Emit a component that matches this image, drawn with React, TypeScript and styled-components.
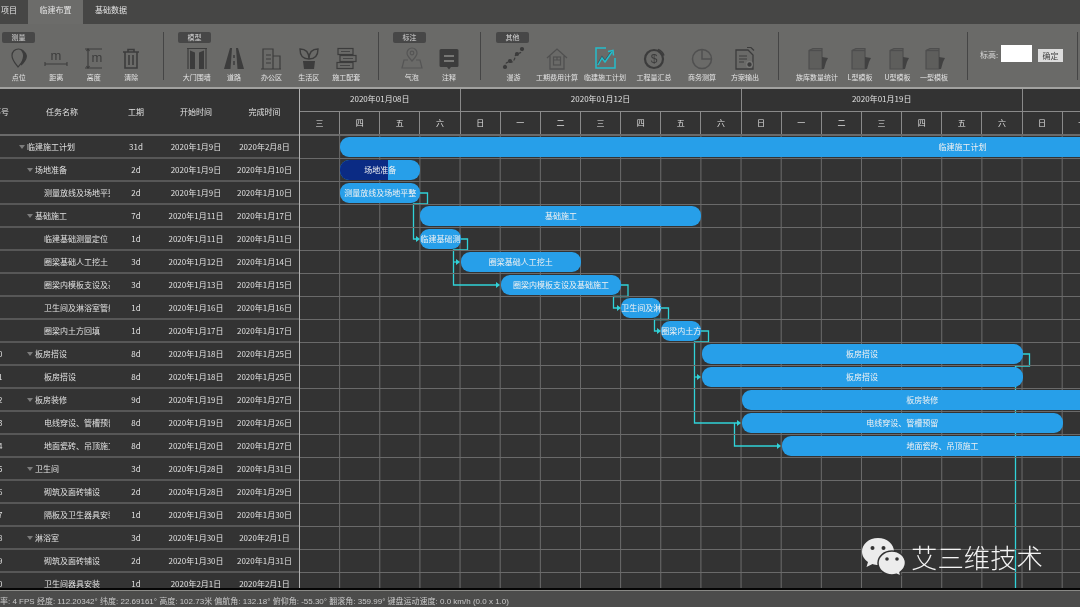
import React from "react";
import styled, { createGlobalStyle } from "styled-components";

const DAY = 40.15;
const ROW = 23.03;
const FONT = `"Noto Sans CJK SC", "Liberation Sans", sans-serif`;

const Global = createGlobalStyle`
  html, body { margin: 0; padding: 0; width: 1080px; height: 607px; overflow: hidden; background: #333; }
  * { box-sizing: border-box; }
`;

const Page = styled.div`
  position: relative;
  width: 1080px;
  height: 607px;
  display: flex;
  flex-direction: column;
  overflow: hidden;
  font-family: ${FONT};
  font-size: 8px;
  color: #e0e0e0;
  background: #333;
  filter: blur(0.4px);
`;

const TabBar = styled.div`
  height: 24px;
  flex: none;
  display: flex;
  background: #464645;
`;

const Tab = styled.div<{ $w: number; $active?: boolean; $left?: boolean }>`
  width: ${(p) => p.$w}px;
  height: 24px;
  padding: 4px 0 0 ${(p) => (p.$left ? 1 : 0)}px;
  line-height: 11px;
  text-align: ${(p) => (p.$left ? "left" : "center")};
  background: ${(p) => (p.$active ? "#6c6c6a" : "transparent")};
  color: #e2e2e2;
`;

const Ribbon = styled.div`
  height: 63px;
  flex: none;
  display: flex;
  background: #6a6a68;
`;

const Sep = styled.div`
  width: 1px;
  height: 48px;
  margin-top: 8px;
  flex: none;
  background: #454545;
`;

const Group = styled.div<{ $w: number; $pad: number }>`
  width: ${(p) => p.$w}px;
  flex: none;
  padding: 8px 0 0 ${(p) => p.$pad}px;
`;

const Chip = styled.div<{ $inset?: number }>`
  width: 33px;
  height: 11px;
  margin-left: ${(p) => p.$inset ?? 0}px;
  border-radius: 2px;
  background: #474747;
  color: #d8d8d8;
  text-align: center;
  font-size: 7px;
  line-height: 11px;
`;

const Tools = styled.div<{ $noChip?: boolean }>`
  display: flex;
  margin-top: ${(p) => (p.$noChip ? 14 : 3)}px;
`;

const Tool = styled.div<{ $w: number }>`
  width: ${(p) => p.$w}px;
  flex: none;
  display: flex;
  flex-direction: column;
  align-items: center;
`;

const IconSlot = styled.div`
  height: 24px;
  display: flex;
  align-items: center;
  justify-content: center;
`;

const ToolLabel = styled.div`
  height: 12px;
  margin-top: 1px;
  line-height: 12px;
  font-size: 7px;
  white-space: nowrap;
  color: #e4e4e4;
`;

const ElevGroup = styled.div`
  width: 109px;
  flex: none;
  display: flex;
  align-items: flex-start;
  padding: 21px 0 0 12px;
`;

const ElevLabel = styled.div`
  width: 21px;
  line-height: 17px;
  margin-top: 1px;
  color: #dadada;
`;

const ElevInput = styled.div`
  width: 31px;
  height: 17px;
  background: #fff;
`;

const ElevButton = styled.div`
  width: 25px;
  height: 13px;
  margin: 4px 0 0 6px;
  background: #dcdcdc;
  color: #444;
  text-align: center;
  line-height: 13px;
`;

const Gantt = styled.div`
  flex: 1;
  min-height: 0;
  display: flex;
  border-top: 2px solid #a2a2a0;
  background: #333;
`;

const Left = styled.div`
  width: 318px;
  margin-left: -18px;
  flex: none;
  border-right: 1px solid #b0b0b0;
  overflow: hidden;
`;

const HeadRow = styled.div`
  height: 47px;
  display: flex;
  align-items: center;
  border-bottom: 2px solid #6a6a6a;
`;

const BodyRow = styled.div`
  height: ${ROW}px;
  display: flex;
  align-items: center;
  border-bottom: 2px solid #575757;
  white-space: nowrap;
`;

const IndexCell = styled.div<{ $head?: boolean }>`
  width: 32px;
  flex: none;
  text-align: center;
  padding-left: ${(p) => (p.$head ? 6 : 0)}px;
`;

const HeadName = styled.div`
  width: 96px;
  flex: none;
  text-align: center;
`;

const Cell = styled.div<{ $w: number }>`
  width: ${(p) => p.$w}px;
  flex: none;
  text-align: center;
`;

const NameCell = styled.div<{ $pad: number }>`
  width: 96px;
  flex: none;
  padding-left: ${(p) => p.$pad}px;
  display: flex;
  align-items: center;
  overflow: hidden;
`;

const Caret = styled.span`
  width: 0;
  height: 0;
  flex: none;
  margin-right: 2px;
  border-left: 3px solid transparent;
  border-right: 3px solid transparent;
  border-top: 4px solid #7c7c7c;
`;

const Right = styled.div`
  flex: 1;
  min-width: 0;
  overflow: hidden;
`;

const Months = styled.div`
  height: 23px;
  display: flex;
  border-bottom: 1px solid #8a8a8a;
`;

const Month = styled.div<{ $days: number }>`
  width: ${(p) => p.$days * DAY}px;
  flex: none;
  text-align: center;
  line-height: 20px;
  border-right: 1px solid #8a8a8a;
`;

const Days = styled.div`
  height: 24px;
  display: flex;
  border-bottom: 2px solid #6a6a6a;
`;

const DayCell = styled.div`
  width: ${DAY}px;
  flex: none;
  text-align: center;
  line-height: 22px;
  border-right: 1px solid #8a8a8a;
`;

const Chart = styled.div`
  position: relative;
  height: 452px;
  overflow: hidden;
  background-image: linear-gradient(to right, #6c6c6c 1px, transparent 1px);
  background-size: ${DAY}px 100%;
  background-position: -1px 0;
`;

const Links = styled.svg`
  position: absolute;
  left: 0;
  top: 0;
`;

const ChartRow = styled.div`
  position: relative;
  height: ${ROW}px;
  padding-top: 1px;
  border-bottom: 1px solid #6a6a6a;
  white-space: nowrap;
`;

const Bar = styled.div<{ $start: number; $span: number }>`
  position: relative;
  height: 19.5px;
  margin-left: ${(p) => p.$start * DAY}px;
  width: ${(p) => p.$span * DAY}px;
  border-radius: 9px;
  background: #279fe9;
  color: #f2f2f2;
  overflow: hidden;
  text-align: center;
  line-height: 19px;
`;

const Progress = styled.div<{ $pct: number }>`
  position: absolute;
  left: 0;
  top: 0;
  bottom: 0;
  width: ${(p) => p.$pct}%;
  background: #0b2b84;
`;

const BarText = styled.span`
  position: relative;
`;

const Status = styled.div`
  height: 19px;
  flex: none;
  border-top: 2px solid #050505;
  background: #4c4c4b;
  box-shadow: inset 0 1px 0 #8a8a86;
  margin-top: -2px;
  position: relative;
  padding-top: 5px;
  line-height: 13px;
  font-family: "Liberation Sans", ${FONT};
  font-size: 8px;
  color: #c9c9c9;
  white-space: nowrap;
  overflow: hidden;
`;

const StatusText = styled.div`
  margin-left: -8px;
`;

const Watermark = styled.div`
  position: absolute;
  left: 862px;
  top: 538px;
  display: flex;
  align-items: center;
  gap: 5px;
  color: #f4f4f4;
  font-size: 26.4px;
  font-weight: 300;
  line-height: 38px;
  white-space: nowrap;
`;

const D = "#3c3c3c";
const S = (p: { children: React.ReactNode }) => (
  <svg width="24" height="24" viewBox="0 0 24 24" fill="none" stroke={D} strokeWidth="1.2">
    {p.children}
  </svg>
);

const MText = (p: { x: number; y: number }) => (
  <text x={p.x} y={p.y} fontSize="13" fontFamily="Liberation Sans" fill={D} stroke="none" textAnchor="middle">m</text>
);

const icons: Record<string, React.ReactNode> = {
  point: <S><path d="M11 21c-3-4-6-7-6-11.500C5 5.500 8 3 11.500 3S18 5.500 18 9.500C18 14 14 17 11 21z" /><path d="M15 5c3 1 5 3 4 7-.6 2.400-3 5-5 7 1-3 3-7 2.600-10-.1-1.500-.8-3-1.600-4z" fill={D} /></S>,
  dist: <S><MText x={12} y={14} /><path d="M1 18h22M1 16v4M23 16v4" strokeWidth="1.100" /></S>,
  height: <S><path d="M3 3h17M3 22h17M6 3v19" /><path d="M4.500 5 6 3l1.500 2M4.500 20 6 22l1.500-2" /><MText x={15} y={16} /></S>,
  trash: <S><path d="M4 6h16M9 6V3.500h6V6M6 6v16h12V6" strokeWidth="1.600" /><path d="M10 9v10M14 9v10" strokeWidth="1.600" /></S>,
  gate: <S><path d="M2 2.500h20M3 2.500V23M21 2.500V23" strokeWidth="1.200" /><path d="M5 4.500l5 2V23H5zM19 4.500l-5 2V23h5z" fill={D} stroke="none" /></S>,
  road: <S><path d="M8 2 2 23h6.500L10 2zM16 2l6 21h-6.500L14 2z" fill={D} stroke="none" /><path d="M12 9v3M12 15v4" strokeWidth="1.500" /></S>,
  office: <S><path d="M4 23V3h10v20M14 10h7v13M2 23h20M7 9h5M7 13h5M7 17h5" /></S>,
  plant: <S><path d="M12 13C5 13 3 9 3 3c5 0 9 3 9 10zM12 13c7 0 9-4 9-10-5 0-9 3-9 10z" strokeWidth="1.400" /><path d="M6 15h12l-1 8H7z" fill={D} stroke="none" /></S>,
  stack: <S><rect x="4" y="2.500" width="15" height="6" /><rect x="6" y="9.500" width="16" height="6" /><rect x="3" y="16.500" width="16" height="6" /><path d="M7 5.500h9M9 12.500h10M6 19.500h10" strokeWidth="0.800" /></S>,
  bubble: <S><g stroke="#555"><path d="M12 15c-2.500-3-5-5-5-8a5 5 0 0 1 10 0c0 3-2.500 5-5 8z" /><circle cx="12" cy="7" r="1.800" /><path d="M8 14H4l-2 8h20l-2-8h-4" /></g></S>,
  note: <S><path d="M4 3h16a1.500 1.500 0 0 1 1.500 1.500v15a1.500 1.500 0 0 1-1.500 1.500h-6l-2 2.500-2-2.500H4a1.500 1.500 0 0 1-1.500-1.500v-15A1.500 1.500 0 0 1 4 3z" fill={D} stroke="none" /><path d="M7 10h10M7 15h10" stroke="#8a8a88" strokeWidth="1.400" /></S>,
  tour: <S><path d="M3 22c0-4 1-6 4-6s3 1 5-2 0-5 3-6 5-1 6-6" strokeDasharray="3 1.500" /><circle cx="3" cy="21" r="1.500" fill={D} /><circle cx="8" cy="15" r="1.500" fill={D} /><circle cx="15" cy="8" r="1.500" fill={D} /><circle cx="20" cy="3" r="1.500" fill={D} /></S>,
  house: <S><g stroke="#505050"><path d="M2 12 12 3l10 9M5 10v13h14V10" strokeWidth="1.300" /><rect x="8.500" y="11" width="7" height="8" /><path d="M8.500 14h7M12 11v3" /></g></S>,
  plan: <svg width="24" height="24" viewBox="0 0 24 24" fill="none" stroke="#26bdca" strokeWidth="1.500"><path d="M13 2H3v20h19V12" /><path d="M5 18l4-7 3 4 7-10" stroke="#2a5a66" strokeWidth="1.700" /><path d="M5 19l4-7 3 4 7-10" /><path d="M15 5.500l5-1 .500 5" /></svg>,
  money: <S><circle cx="12" cy="13" r="9" strokeWidth="2.200" /><path d="M16 3.500c3 1 5 3 6 6" strokeWidth="1.400" /><text x="12" y="17" fontSize="12" fontFamily="Liberation Sans" fill={D} stroke="none" textAnchor="middle">$</text></S>,
  pie: <S><g stroke="#505050" strokeWidth="1.500"><circle cx="12" cy="13" r="9.500" /><path d="M12 3.500V13h9" /></g></S>,
  doc: <S><path d="M3 4h12l5 5v14H3z" strokeWidth="1.300" /><path d="M14 1.500h4l3 3M6 10h8M6 13h8M6 16h5" /><circle cx="16.500" cy="18.500" r="2.800" fill={D} stroke="#7a7a78" /></S>,
  box: <S><g stroke="#4e4e4e" fill="#5e5e5c"><path d="M4 4.500 8 2.500h9V23H4z" /><path d="M4 4.500h13" /></g><path d="M17 11l6 1-2 4-2 7h-2z" fill="#414141" stroke="none" /></S>,
};

type ToolDef = [string, string, number];
const mk = (arr: ToolDef[]) =>
  arr.map(([key, label, w]) => (
    <Tool key={label} $w={w}>
      <IconSlot>{icons[key]}</IconSlot>
      <ToolLabel>{label}</ToolLabel>
    </Tool>
  ));

type RowDef = [string, number, string, string, string];
const rows: RowDef[] = [
  ["临建施工计划", 0, "31d", "2020年1月9日", "2020年2月8日"],
  ["场地准备", 1, "2d", "2020年1月9日", "2020年1月10日"],
  ["测量放线及场地平整", 2, "2d", "2020年1月9日", "2020年1月10日"],
  ["基础施工", 1, "7d", "2020年1月11日", "2020年1月17日"],
  ["临建基础测量定位", 2, "1d", "2020年1月11日", "2020年1月11日"],
  ["圈梁基础人工挖土", 2, "3d", "2020年1月12日", "2020年1月14日"],
  ["圈梁内模板支设及基础施工", 2, "3d", "2020年1月13日", "2020年1月15日"],
  ["卫生间及淋浴室管线", 2, "1d", "2020年1月16日", "2020年1月16日"],
  ["圈梁内土方回填", 2, "1d", "2020年1月17日", "2020年1月17日"],
  ["板房搭设", 1, "8d", "2020年1月18日", "2020年1月25日"],
  ["板房搭设", 2, "8d", "2020年1月18日", "2020年1月25日"],
  ["板房装修", 1, "9d", "2020年1月19日", "2020年1月27日"],
  ["电线穿设、管槽预留", 2, "8d", "2020年1月19日", "2020年1月26日"],
  ["地面瓷砖、吊顶施工", 2, "8d", "2020年1月20日", "2020年1月27日"],
  ["卫生间", 1, "3d", "2020年1月28日", "2020年1月31日"],
  ["砌筑及面砖铺设", 2, "2d", "2020年1月28日", "2020年1月29日"],
  ["隔板及卫生器具安装", 2, "1d", "2020年1月30日", "2020年1月30日"],
  ["淋浴室", 1, "3d", "2020年1月30日", "2020年2月1日"],
  ["砌筑及面砖铺设", 2, "2d", "2020年1月30日", "2020年1月31日"],
  ["卫生间器具安装", 2, "1d", "2020年2月1日", "2020年2月1日"],
];

const bars: [number, number, number?][] = [
  [1, 31], [1, 2, 60], [1, 2], [3, 7], [3, 1], [4, 3], [5, 3], [8, 1], [9, 1],
  [10, 8], [10, 8], [11, 9], [11, 8], [12, 8],
];

const dayNames = "三四五六日一二三四五六日一二三四五六日一".split("");
const PAD = [5, 13, 30];

const polylines = [
  "420,193 427.500,193 427.500,204 413.500,204 413.500,239 418,239",
  "460,239 467.500,239 467.500,250 453.500,250 453.500,285 498,285",
  "453.500,262 458,262",
  "620,285 628,285 628,296.500 613.500,296.500 613.500,308 619,308",
  "661,308 668.500,308 668.500,319.500 654.500,319.500 654.500,331 659,331",
  "701,331 708.500,331 708.500,342 694.500,342 694.500,423 739,423",
  "694.500,377 699,377",
  "734.500,423 734.500,446 779,446",
  "1022,354 1029.500,354 1029.500,366 1015.500,366 1015.500,588",
];
const arrows: [number, number][] = [
  [420, 239], [460, 262], [500, 285], [621, 308], [661, 331], [701, 377], [741, 423], [781, 446],
];

export default function App() {
  return (
    <Page>
      <Global />
      <TabBar>
        <Tab $w={28} $left>项目</Tab>
        <Tab $w={55} $active>临建布置</Tab>
        <Tab $w={56}>基础数据</Tab>
      </TabBar>
      <Ribbon>
        <Group $w={163} $pad={0}>
          <Chip $inset={2}>测量</Chip>
          <Tools>{mk([["point", "点位", 37.5], ["dist", "距离", 37.5], ["height", "高度", 37.5], ["trash", "清除", 37.5]])}</Tools>
        </Group>
        <Sep />
        <Group $w={214} $pad={14}>
          <Chip>模型</Chip>
          <Tools>{mk([["gate", "大门围墙", 37.4], ["road", "道路", 37.4], ["office", "办公区", 37.4], ["plant", "生活区", 37.4], ["stack", "施工配套", 37.4]])}</Tools>
        </Group>
        <Sep />
        <Group $w={101} $pad={14}>
          <Chip>标注</Chip>
          <Tools>{mk([["bubble", "气泡", 37.4], ["note", "注释", 37.4]])}</Tools>
        </Group>
        <Sep />
        <Group $w={297} $pad={15}>
          <Chip>其他</Chip>
          <Tools>{mk([["tour", "漫游", 35], ["house", "工期费用计算", 52], ["plan", "临建施工计划", 44], ["money", "工程量汇总", 54], ["pie", "商务测算", 42], ["doc", "方案输出", 44]])}</Tools>
        </Group>
        <Sep />
        <Group $w={188} $pad={15}>
          <Tools $noChip>{mk([["box", "族库数量统计", 46], ["box", "L型模板", 40], ["box", "U型模板", 35], ["box", "一型模板", 38]])}</Tools>
        </Group>
        <Sep />
        <ElevGroup>
          <ElevLabel>标高:</ElevLabel>
          <ElevInput />
          <ElevButton>确定</ElevButton>
        </ElevGroup>
        <Sep />
      </Ribbon>
      <Gantt>
        <Left>
          <HeadRow>
            <IndexCell $head>序号</IndexCell>
            <HeadName>任务名称</HeadName>
            <Cell $w={52}>工期</Cell>
            <Cell $w={68}>开始时间</Cell>
            <Cell $w={69}>完成时间</Cell>
          </HeadRow>
          {rows.map((r, i) => (
            <BodyRow key={i}>
              <IndexCell>{i + 1}</IndexCell>
              <NameCell $pad={PAD[r[1]]}>
                {r[1] < 2 && <Caret />}
                {r[0]}
              </NameCell>
              <Cell $w={52}>{r[2]}</Cell>
              <Cell $w={68}>{r[3]}</Cell>
              <Cell $w={69}>{r[4]}</Cell>
            </BodyRow>
          ))}
        </Left>
        <Right>
          <Months>
            <Month $days={4}>2020年01月08日</Month>
            <Month $days={7}>2020年01月12日</Month>
            <Month $days={7}>2020年01月19日</Month>
            <Month $days={7} />
          </Months>
          <Days>
            {dayNames.map((d, i) => (
              <DayCell key={i}>{d}</DayCell>
            ))}
          </Days>
          <Chart>
            <Links width="780" height="452" viewBox="300 136 780 452" fill="none">
              {polylines.map((p) => (
                <polyline key={p} points={p} stroke="#30d2d8" strokeWidth="1.300" />
              ))}
              {arrows.map(([x, y]) => (
                <polygon key={`${x}-${y}`} points={`${x},${y} ${x - 4},${y - 3} ${x - 4},${y + 3}`} fill="#30d2d8" />
              ))}
            </Links>
            {Array.from({ length: 20 }).map((_, i) => {
              const b = bars[i];
              return (
                <ChartRow key={i}>
                  {b && (
                    <Bar $start={b[0]} $span={b[1]}>
                      {b[2] && <Progress $pct={b[2]} />}
                      <BarText>{rows[i][0]}</BarText>
                    </Bar>
                  )}
                </ChartRow>
              );
            })}
          </Chart>
        </Right>
      </Gantt>
      <Status>
        <StatusText>帧率: 4 FPS 经度: 112.20342° 纬度: 22.69161° 高度: 102.73米 偏航角: 132.18° 俯仰角: -55.30° 翻滚角: 359.99° 键盘运动速度: 0.0 km/h (0.0 x 1.0)</StatusText>
      </Status>
      <Watermark>
        <svg width="44" height="38" viewBox="0 0 44 38">
          <path d="M16 0C7 0 0 6 0 13.500c0 4.500 2.500 8 6 10.500l-1.500 5 6-3c2 .6 4 1 5.500 1 9 0 16-6 16-13.500S25 0 16 0z" fill="#ececec" />
          <circle cx="10.500" cy="10" r="2" fill="#333" />
          <circle cx="21.500" cy="10" r="2" fill="#333" />
          <path d="M30 13c-8 0-14 5.500-14 12s6 12 14 12c1.500 0 3-.3 4.500-.7l4.500 2-1-4c3-2.300 5.500-5.600 5.500-9.300 0-6.500-6-12-13.500-12z" fill="#ececec" stroke="#333" strokeWidth="1.500" />
          <circle cx="25" cy="21" r="1.800" fill="#333" />
          <circle cx="35" cy="21" r="1.800" fill="#333" />
        </svg>
        <span>艾三维技术</span>
      </Watermark>
    </Page>
  );
}
